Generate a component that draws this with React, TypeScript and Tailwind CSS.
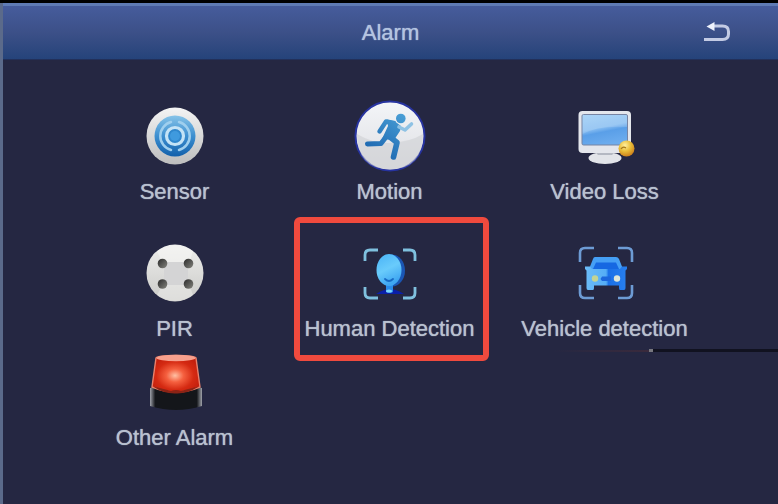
import type { ReactNode } from "react";

function BackIcon() {
  return (
    <svg viewBox="0 0 32 24" className="h-6 w-8" fill="none">
      <path
        d="M3 18.5H21.5Q27.5 18.5 27.5 13V10.5Q27.5 5 21.5 5H12"
        stroke="#c3cbe4"
        strokeWidth="3"
      />
      <path d="M5.5 5.5L13.5 1V10Z" fill="#eef2fc" />
    </svg>
  );
}

function SensorIcon() {
  return (
    <svg viewBox="0 0 72 72" className="h-18 w-18" fill="none">
      <defs>
        <linearGradient id="sensorRim" x1="0" y1="0" x2="0" y2="1">
          <stop offset="0" stopColor="#f4f4f4" />
          <stop offset="1" stopColor="#bdbdbd" />
        </linearGradient>
        <linearGradient id="sensorFace" x1="0" y1="0" x2="0" y2="1">
          <stop offset="0" stopColor="#86c3e8" />
          <stop offset="0.5" stopColor="#3d8fd0" />
          <stop offset="1" stopColor="#1260ab" />
        </linearGradient>
      </defs>
      <circle cx="36" cy="36" r="28.5" fill="url(#sensorRim)" />
      <circle cx="36" cy="36" r="20.5" fill="url(#sensorFace)" />
      <path
        d="M32 50A14.5 14.5 0 0 1 32 22M40 22A14.5 14.5 0 0 1 40 50"
        stroke="#9fcfee"
        strokeWidth="2.5"
        strokeLinecap="round"
      />
      <circle cx="36" cy="36" r="8.5" fill="#2f87cd" stroke="#c4e3f6" strokeWidth="3.2" />
      <circle cx="36" cy="36" r="5" fill="#3f9ade" />
    </svg>
  );
}

function MotionIcon() {
  return (
    <svg viewBox="0 0 72 72" className="h-18 w-18" fill="none">
      <defs>
        <linearGradient id="motionDisc" x1="0" y1="0" x2="0" y2="1">
          <stop offset="0" stopColor="#f3f5f8" />
          <stop offset="1" stopColor="#dedee2" />
        </linearGradient>
        <linearGradient id="runner" gradientUnits="userSpaceOnUse" x1="50" y1="14" x2="22" y2="56">
          <stop offset="0" stopColor="#4a9fd6" />
          <stop offset="1" stopColor="#1c67b0" />
        </linearGradient>
      </defs>
      <circle cx="36" cy="36" r="34.5" fill="url(#motionDisc)" stroke="#2733a0" strokeWidth="2" />
      <path d="M3 34Q20 44 36 43Q56 42 69 34Q69 69 36 69.5Q3 69 3 34Z" fill="#cfd0d4" fillOpacity="0.6" />
      <circle cx="46.8" cy="18.5" r="4.8" fill="url(#runner)" />
      <path d="M33 19.5L41 21.5L47 26L46 31L40 40L28 39L34 26Z" fill="url(#runner)" />
      <g stroke="url(#runner)" strokeLinecap="round" strokeLinejoin="round">
        <path d="M40 23L32 21.5L25.5 31.5" strokeWidth="4.4" />
        <path d="M32 37L27 43.5L13.5 44" strokeWidth="5" />
        <path d="M36 37L43 42.5L39.5 57" strokeWidth="5.6" />
      </g>
      <path
        d="M45 27L51 30L57.5 24"
        stroke="#8fc2e4"
        strokeWidth="3.6"
        strokeLinecap="round"
        strokeLinejoin="round"
      />
    </svg>
  );
}

function VideoLossIcon() {
  return (
    <svg viewBox="0 0 72 72" className="h-18 w-18" fill="none">
      <defs>
        <linearGradient id="screen" x1="0.2" y1="0" x2="0.5" y2="1">
          <stop offset="0" stopColor="#9cccf5" />
          <stop offset="0.45" stopColor="#8abff2" />
          <stop offset="0.6" stopColor="#5a9fe8" />
          <stop offset="1" stopColor="#6cacee" />
        </linearGradient>
        <radialGradient id="ball" cx="0.4" cy="0.3" r="0.75">
          <stop offset="0" stopColor="#fff0a0" />
          <stop offset="0.5" stopColor="#e9bd38" />
          <stop offset="1" stopColor="#c97818" />
        </radialGradient>
      </defs>
      <ellipse cx="36" cy="58" rx="16.5" ry="6" fill="#e2e4e9" />
      <rect x="9.5" y="11" width="52.5" height="42" rx="4" fill="#e4e6ec" />
      <path d="M27 53H45L43 55H29Z" fill="#b4b8c2" />
      <rect x="13" y="14.500" width="45.500" height="30.500" rx="1.500" fill="url(#screen)" stroke="#7784a3" />
      <path d="M13.500 34Q30 25 58 27V15H13.500Z" fill="#ffffff" fillOpacity="0.14" />
      <circle cx="57.500" cy="48.500" r="8" fill="url(#ball)" />
      <path d="M52 49Q54 46 57 48" stroke="#a87a1c" strokeWidth="1.200" />
    </svg>
  );
}

function PirIcon() {
  return (
    <svg viewBox="0 0 72 72" className="h-18 w-18" fill="none">
      <defs>
        <linearGradient id="pirDome" x1="0" y1="0" x2="0" y2="1">
          <stop offset="0" stopColor="#ededec" />
          <stop offset="1" stopColor="#cbcbc8" />
        </linearGradient>
        <linearGradient id="pirHole" x1="0" y1="0" x2="1" y2="1">
          <stop offset="0" stopColor="#2a2a2a" />
          <stop offset="1" stopColor="#85857f" />
        </linearGradient>
      </defs>
      <circle cx="36" cy="36" r="28.5" fill="url(#pirDome)" />
      <path d="M24 27L18 14Q36 2 54 14L50 27Z" fill="#f6f6f5" fillOpacity="0.6" />
      <path d="M24 47L18 58Q36 70 54 58L50 47Z" fill="#f0f0ee" fillOpacity="0.5" />
      <rect x="25" y="25" width="24" height="23" rx="2" fill="#d4d4d5" />
      <g fill="url(#pirHole)">
        <circle cx="23.5" cy="26.5" r="4.8" />
        <circle cx="49.5" cy="26.5" r="4.8" />
        <circle cx="23.5" cy="47" r="4.8" />
        <circle cx="49.5" cy="47" r="4.8" />
      </g>
    </svg>
  );
}

function HumanIcon() {
  return (
    <svg viewBox="0 0 72 72" className="h-18 w-18" fill="none">
      <defs>
        <linearGradient id="face" x1="0" y1="0" x2="0.4" y2="1">
          <stop offset="0" stopColor="#48b2f6" />
          <stop offset="0.55" stopColor="#69cbfb" />
          <stop offset="1" stopColor="#3ea6f2" />
        </linearGradient>
      </defs>
      <path
        d="M11 24V18Q11 13 16 13H24M49 13H56Q61 13 61 18V24M61 50V56Q61 61 56 61H49M24 61H16Q11 61 11 56V50"
        stroke="#7fc0de"
        strokeWidth="2.8"
      />
      <path d="M22 57Q30 52 36 52Q42 52 50 57Z" fill="#0a1fa8" />
      <ellipse cx="38" cy="33.5" rx="13" ry="16" fill="#1a56b4" />
      <path d="M32 45H39V55Q36 57 32 55Z" fill="#2a8bea" />
      <ellipse cx="35" cy="33" rx="12.5" ry="16" fill="url(#face)" />
      <path d="M31 42Q35 46 39 42" stroke="#176bc4" strokeWidth="1.8" strokeLinecap="round" />
      <ellipse cx="35" cy="54" rx="3" ry="1.6" fill="#7ad6ff" />
    </svg>
  );
}

function VehicleIcon() {
  return (
    <svg viewBox="0 0 72 72" className="h-18 w-18" fill="none">
      <defs>
        <linearGradient id="carBody" x1="0" y1="0" x2="1" y2="0">
          <stop offset="0" stopColor="#6bbcf8" />
          <stop offset="0.5" stopColor="#55adf6" />
          <stop offset="0.56" stopColor="#1a70e8" />
          <stop offset="1" stopColor="#287fee" />
        </linearGradient>
      </defs>
      <path
        d="M11 25V16Q11 11 16 11H25M49 11H58Q63 11 63 16V25M63 48V56Q63 61 58 61H49M25 61H16Q11 61 11 56V48"
        stroke="#6d9bd4"
        strokeWidth="2.6"
      />
      <path d="M26 20H47Q49 20 50 22L54 32H20L24 22Q24.5 20 26 20Z" fill="#459ff5" />
      <path d="M27 25.5H47L50 32H24Z" fill="#1668e2" />
      <path
        d="M16 29.5H21L23 32H51L53 29.5H58V32L56.5 33.5V51Q56.5 53 55 53H51Q50 53 50 51V48.5H25V51Q25 53 24 53H19Q17.5 53 17.5 51V33.5L16 32Z"
        fill="url(#carBody)"
      />
      <path d="M33 39.5H42V44H33L31.5 42Z" fill="#1c67dc" />
      <circle cx="26" cy="41.5" r="3.2" fill="#c3d494" />
      <circle cx="48" cy="41.5" r="3.2" fill="#dfe6d8" />
    </svg>
  );
}

function AlarmLampIcon() {
  return (
    <svg viewBox="0 0 72 72" className="h-18 w-18" fill="none">
      <defs>
        <radialGradient id="lamp" cx="0.48" cy="0.55" r="0.6">
          <stop offset="0" stopColor="#ffc0a4" />
          <stop offset="0.3" stopColor="#f5603f" />
          <stop offset="0.65" stopColor="#d52a12" />
          <stop offset="1" stopColor="#c01d0c" />
        </radialGradient>
        <linearGradient id="lampBase" x1="0" y1="0" x2="1" y2="0">
          <stop offset="0" stopColor="#a0a3ab" />
          <stop offset="0.1" stopColor="#14161a" />
          <stop offset="0.9" stopColor="#14161a" />
          <stop offset="1" stopColor="#a0a3ab" />
        </linearGradient>
      </defs>
      <path d="M11 42Q37 36 63 42V60Q37 68 11 60Z" fill="url(#lampBase)" />
      <path
        d="M17 12Q18 9.5 37 9.5Q56 9.5 57 12L61 41Q37 51 13 41Z"
        fill="url(#lamp)"
        stroke="#e9826c"
        strokeWidth="1.4"
      />
      <ellipse cx="37" cy="12" rx="19.5" ry="3.2" fill="#f7a08d" />
      <path d="M14 40.5Q26 43 32 45Q37 43 42 45Q48 43 60 40.5Q48 48 37 47.500Q25 48 14 40.500Z" fill="#8c2315" />
    </svg>
  );
}

type Item = {
  label: string;
  icon: ReactNode;
  highlighted?: boolean;
};

const TOP_ITEMS: Item[] = [
  { label: "Sensor", icon: <SensorIcon /> },
  { label: "Motion", icon: <MotionIcon /> },
  { label: "Video Loss", icon: <VideoLossIcon /> },
];

const DETECTION_ITEMS: Item[] = [
  { label: "PIR", icon: <PirIcon /> },
  { label: "Human Detection", icon: <HumanIcon />, highlighted: true },
  { label: "Vehicle detection", icon: <VehicleIcon /> },
];

const OTHER_ITEMS: Item[] = [{ label: "Other Alarm", icon: <AlarmLampIcon /> }];

function MenuRow({ items, children }: { items: Item[]; children?: ReactNode }) {
  return (
    <div className="relative grid grid-cols-3">
      {items.map((item) => (
        <button
          key={item.label}
          type="button"
          className="relative flex flex-col items-center gap-2"
        >
          {item.icon}
          <span className="text-[22px] leading-6 whitespace-nowrap text-shadow-[0_0_1px_#b9c1d0]">
            {item.label}
          </span>
          {item.highlighted && (
            <span className="absolute -inset-y-5 left-3 right-2 rounded-md border-6 border-[#f04a3e]" />
          )}
        </button>
      ))}
      {children}
    </div>
  );
}

export default function App() {
  return (
    <div className="min-h-screen flex flex-col bg-black pt-[3px] font-['Liberation_Sans',Arial,sans-serif] text-[#b9c1d0]">
      <div className="flex-1 flex flex-col border-l-3 border-[#5b6a8a] bg-[#252742]">
        <header className="grid grid-cols-[1fr_auto_1fr] items-center h-[57px] border-t-3 border-[#5f7bb4] border-b border-b-[#22305a] bg-linear-to-b from-[#465c9c] via-[#3c5088] to-[#25437a]">
          <h1 className="col-start-2 text-[22px] leading-6 text-[#b4c4e0] text-shadow-[0_0_1px_#b4c4e0]">
            Alarm
          </h1>
          <button type="button" aria-label="Back" className="justify-self-end mr-[45px]">
            <BackIcon />
          </button>
        </header>

        <main className="flex-1 pt-10 pb-12 pl-16 pr-[66px]">
          <MenuRow items={TOP_ITEMS} />
          <div className="mt-[33px] mb-[5px]">
            <MenuRow items={DETECTION_ITEMS}>
              {/* divider running off the right edge of the window */}
              <div className="absolute top-28 -right-[66px] flex items-center">
                <span className="h-0.5 w-24 bg-linear-to-r from-[#252742] to-[#3a2a3c]" />
                <span className="h-[3px] w-1 bg-[#77777f]" />
                <span className="h-[3px] w-[125px] bg-[#111220]" />
              </div>
            </MenuRow>
          </div>
          <MenuRow items={OTHER_ITEMS} />
        </main>
      </div>
    </div>
  );
}
